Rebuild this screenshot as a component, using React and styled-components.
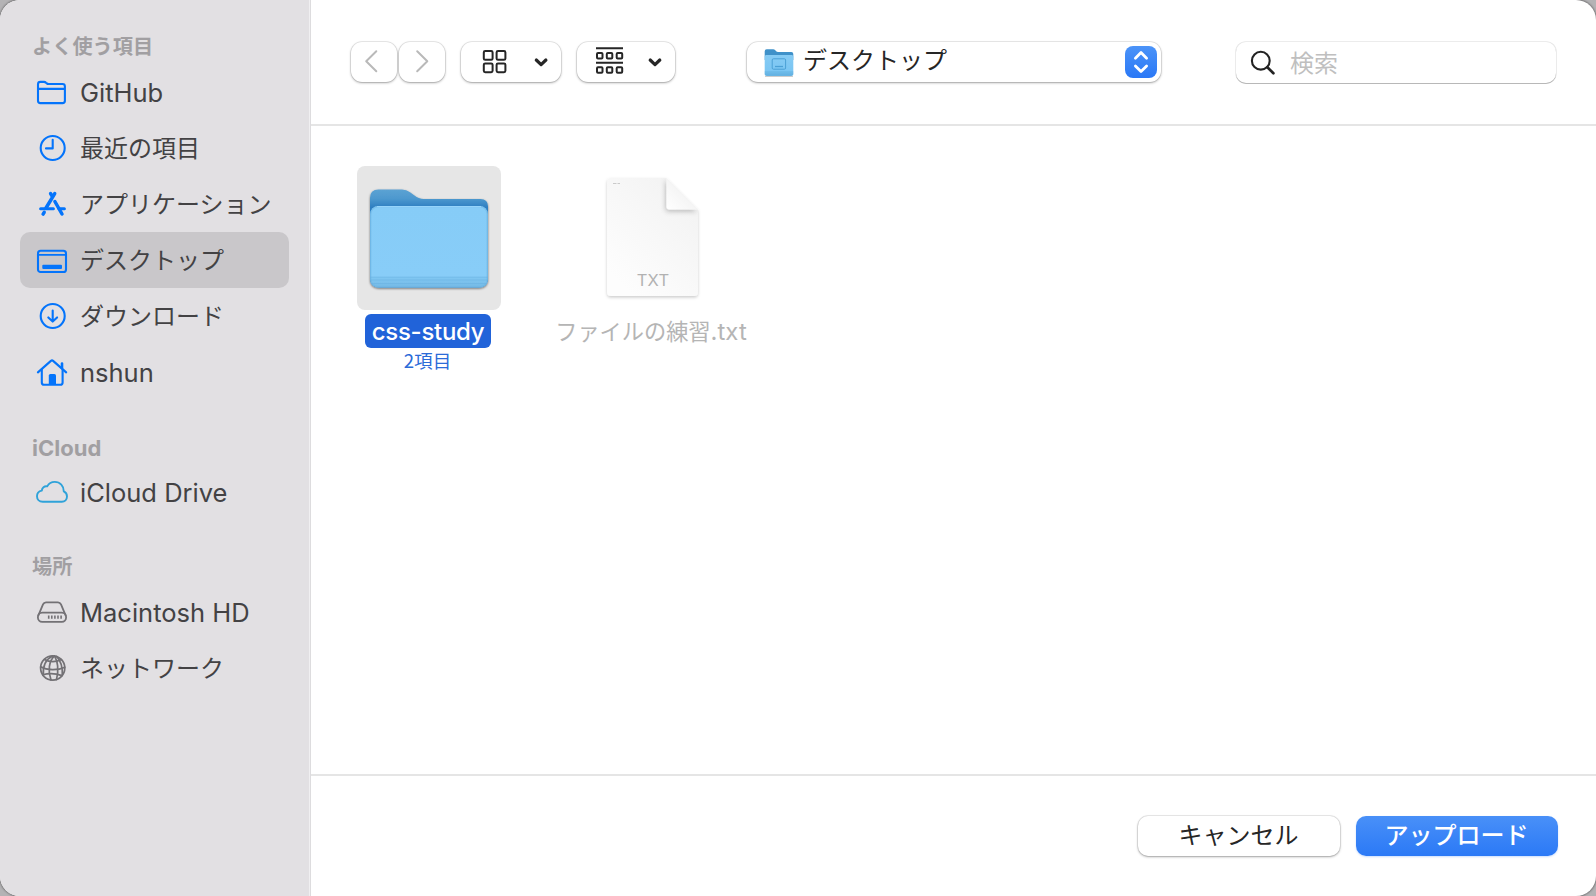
import React from 'react';
import styled, { createGlobalStyle, css } from 'styled-components';

const GlobalStyle = createGlobalStyle`
  * { box-sizing: border-box; }
  html, body { margin: 0; padding: 0; }
  body {
    background: #b4b3b5;
    overflow: hidden;
    font-family: Inter, "Noto Sans CJK JP", sans-serif;
  }
  svg { display: block; flex: none; }
`;

const jp = css`
  font-family: "Noto Sans CJK JP", sans-serif;
`;

const Window = styled.div`
  display: flex;
  width: 1596px;
  height: 896px;
  border-radius: 20px;
  overflow: hidden;
  background: #fff;
  box-shadow: 0 0 2px 1px rgba(0, 0, 0, 0.35);
`;

const Sidebar = styled.nav`
  width: 311px;
  flex: none;
  padding: 28px 20px 0;
  background: #e2e0e3;
  border-right: 1px solid #dddcde;
  box-shadow: inset -1px 0 0 #f0eff1;
`;

const Section = styled.section`
  margin-bottom: ${(p) => p.$gap}px;
`;

const SectionTitle = styled.h2`
  ${(p) => p.$jp && jp}
  margin: 0;
  padding-left: 12px;
  height: ${(p) => (p.$jp ? 36 : 35)}px;
  line-height: ${(p) => (p.$jp ? 36 : 38)}px;
  font-size: ${(p) => (p.$jp ? 20.2 : 22)}px;
  font-weight: ${(p) => (p.$jp ? 700 : 650)};
  color: #a19fa2;
`;

const Item = styled.div`
  display: flex;
  align-items: center;
  gap: 10px;
  width: 269px;
  height: 56px;
  padding-left: 14px;
  border-radius: 10px;
  background: ${(p) => (p.$selected ? '#c9c7ca' : 'transparent')};
  color: ${(p) => p.$tint};
`;

const ItemLabel = styled.span`
  ${(p) => p.$jp && jp}
  margin-top: ${(p) => (p.$jp ? -2 : 2)}px;
  font-size: ${(p) => (p.$jp ? 24 : 25.5)}px;
  line-height: 36px;
  white-space: nowrap;
  color: #434244;
`;

const Main = styled.main`
  flex: 1;
  display: flex;
  flex-direction: column;
`;

const Toolbar = styled.header`
  display: flex;
  align-items: flex-start;
  height: 126px;
  padding: 42px 0 0 40px;
  border-bottom: 2px solid #e5e5e5;
`;

const Control = styled.div`
  display: flex;
  align-items: center;
  flex: none;
  width: ${(p) => p.$w}px;
  height: 40px;
  margin-right: ${(p) => p.$after || 0}px;
  border-radius: 11px;
  background: #fff;
  box-shadow: 0 0 0 0.7px rgba(0, 0, 0, 0.1), 0 1px 2.5px rgba(0, 0, 0, 0.32);
`;

const PathName = styled.span`
  ${jp}
  flex: 1;
  padding-left: 8px;
  font-size: 24px;
  line-height: 36px;
  margin-top: -7px;
  color: #262626;
`;

const Stepper = styled.div`
  width: 32px;
  height: 32px;
  margin-right: 4px;
  border-radius: 8px;
  background: linear-gradient(#4b93f8, #2a78f6);
`;

const SearchField = styled.div`
  display: flex;
  align-items: center;
  width: 320px;
  height: 41px;
  padding-left: 14px;
  gap: 14px;
  border-radius: 10px;
  box-shadow: 0 0 0 0.8px rgba(0, 0, 0, 0.1), 0 1px 0.5px rgba(0, 0, 0, 0.22);
`;

const Placeholder = styled.span`
  ${jp}
  margin-top: -2px;
  font-size: 24px;
  line-height: 36px;
  color: #bfbfbf;
`;

const Files = styled.div`
  flex: 1;
  display: flex;
  align-items: flex-start;
  gap: 23px;
  padding: 40px 0 0 18px;
`;

const File = styled.div`
  display: flex;
  flex-direction: column;
  align-items: center;
  width: 200px;
`;

const Thumb = styled.div`
  width: 144px;
  height: 144px;
  border-radius: 8px;
  background: ${(p) => (p.$selected ? '#e6e6e6' : 'transparent')};
`;

const FileName = styled.div`
  height: 34px;
  margin: 4px 2px 0 0;
  padding: 0 6.5px;
  border-radius: 6px;
  font-size: 24px;
  line-height: ${(p) => (p.$selected ? 36 : 33)}px;
  letter-spacing: ${(p) => (p.$selected ? -0.3 : 0)}px;
  white-space: nowrap;
  font-weight: ${(p) => (p.$selected ? 500 : 400)};
  background: ${(p) => (p.$selected ? '#2163d9' : 'transparent')};
  color: ${(p) => (p.$selected ? '#fff' : '#b5b5b5')};
`;

const JpPart = styled.span`
  ${jp}
  font-size: 22.2px;
`;

const FileInfo = styled.div`
  ${jp}
  height: 24px;
  margin-right: 3px;
  line-height: 24px;
  font-size: 18.6px;
  color: #2b6bd8;
`;

const Footer = styled.footer`
  display: flex;
  justify-content: flex-end;
  gap: 16px;
  height: 122px;
  padding: 40px 38px 0 0;
  border-top: 2px solid #e5e5e5;
`;

const Button = styled.button`
  ${jp}
  width: 202px;
  height: 40px;
  padding: 0 1px 5px 0;
  border: 0;
  border-radius: 10px;
  font-size: 24px;
  line-height: 35px;
  font-weight: ${(p) => (p.$primary ? 500 : 400)};
  color: ${(p) => (p.$primary ? '#fff' : '#262626')};
  background: ${(p) => (p.$primary ? 'linear-gradient(#4990f8, #2b79f6)' : '#fff')};
  box-shadow: ${(p) =>
    p.$primary
      ? '0 1px 2px rgba(43, 121, 246, 0.25)'
      : '0 0 0 0.7px rgba(0,0,0,0.1), 0 1px 2.5px rgba(0,0,0,0.32)'};
`;

const Glyph = ({ children, sw = 2.1 }) => (
  <svg width="36" height="32" viewBox="0 0 36 32" fill="none" stroke="currentColor" strokeWidth={sw} strokeLinecap="round" strokeLinejoin="round">
    {children}
  </svg>
);

const FolderGlyph = () => (
  <Glyph>
    <path d="M4 8.2Q4 5.9 6.4 5.9H10Q11.2 5.9 12 6.7L12.8 7.4Q13.5 8 14.6 8H28.5Q30.9 8 30.9 10.4V24.7Q30.9 27.1 28.5 27.1H6.4Q4 27.1 4 24.7ZM4 12.9H31" />
  </Glyph>
);
const ClockGlyph = () => (
  <Glyph>
    <circle cx="18.7" cy="16" r="12" />
    <path d="M18.7 7.8V16.4H12" />
  </Glyph>
);
const AppsGlyph = () => (
  <Glyph sw={3.5}>
    <path d="M20.7 5.6L12 20M16.6 5.6L18.4 8.6M20.9 13.5L28 26M10.2 24.3L9.1 26.1" />
    <path d="M6.6 20.7H19.4M25 20.7H30.4" strokeWidth="3" />
  </Glyph>
);
const DesktopGlyph = () => (
  <Glyph>
    <rect x="4" y="6.8" width="28" height="21.2" rx="2.6" />
    <path d="M4 10.8H32" strokeWidth="1.8" />
    <rect x="8.3" y="20.8" width="19.7" height="4.3" rx="1" fill="currentColor" stroke="none" />
  </Glyph>
);
const DownloadGlyph = () => (
  <Glyph>
    <circle cx="18.7" cy="16" r="12" />
    <path d="M18.7 10.5V21.3M14.3 17.4L18.7 21.6L23.1 17.4" />
  </Glyph>
);
const HomeGlyph = () => (
  <Glyph>
    <path d="M3.9 16.4L16.9 4.9Q18 4 19.1 4.9L32.2 16.4" />
    <path d="M7.8 13.5V26.4Q7.8 28.8 10.2 28.8H26.2Q28.6 28.8 28.6 26.4V13.5" />
    <path d="M28 7.5V12" strokeWidth="2.6" />
    <path d="M14.8 28.8V19.6Q14.8 18 16.4 18H20.4Q22 18 22 19.6V28.8Z" fill="currentColor" stroke="none" />
  </Glyph>
);
const CloudGlyph = () => (
  <Glyph sw={1.9}>
    <path d="M8.8 25.7C5 25.7 3 23.2 3 20.2C3 17.4 4.8 15.2 7.8 14.6C8 11.8 10.3 9.8 13.2 10.4C14.8 7.4 17.6 5.9 20.8 5.9C26 5.9 29.9 10 29.8 15.4C32 16.4 33 18.3 33 20.5C33 23.5 30.8 25.7 27.8 25.7Z" />
  </Glyph>
);
const DriveGlyph = () => (
  <Glyph sw={1.8}>
    <path d="M4.4 19.4L9 8.4Q9.9 6.3 12 6.3H24Q26.1 6.3 27 8.4L31.6 19.4" />
    <rect x="3.9" y="16.7" width="28.2" height="9.1" rx="4.3" />
    <path d="M14.7 19.4V22.8M17.8 19.4V22.8M20.9 19.4V22.8M24 19.4V22.8M27.1 19.4V22.8" strokeWidth="1.6" strokeLinecap="butt" />
  </Glyph>
);
const GlobeGlyph = () => (
  <Glyph sw={1.7}>
    <circle cx="18.7" cy="16" r="12.1" />
    <path d="M20.5 3.9C15 8.8 13.6 18.8 17 28M20.5 3.9C24 9.8 24.8 17.8 22.5 27.6M18.5 3.9C11.5 7.3 8.6 13.3 9.3 23.6M22.5 4.4C27.4 9.2 28.7 14.3 28.3 23.3" />
    <path d="M10.5 7.6C15.5 10.2 22 10.2 27.5 7.6M6.6 14.8C13 18.4 23.5 18.6 30.8 15.2M8.7 22.8C14.5 21.2 22 21.5 28 23.6" />
  </Glyph>
);

const Nav = ({ d }) => (
  <svg width="46" height="40" viewBox="0 0 46 40" fill="none" stroke="#b9b9b9" strokeWidth="2" strokeLinecap="round" strokeLinejoin="round">
    <path d={d} />
  </svg>
);

const ICON_CELLS = [[22.8, 9], [35.6, 9], [22.8, 21.4], [35.6, 21.4]];

const IconViewGlyph = () => (
  <svg width="100" height="40" viewBox="0 0 100 40" fill="none" stroke="#262626" strokeWidth="2">
    {ICON_CELLS.map(([x, y]) => (
      <rect key={`${x}-${y}`} x={x} y={y} width="8.8" height="8.8" rx="1.4" />
    ))}
    <path d="M75.3 18L80.1 22.6L84.9 18" strokeWidth="3.2" strokeLinecap="round" strokeLinejoin="round" />
  </svg>
);

const GroupViewGlyph = () => (
  <svg width="98" height="40" viewBox="0 0 98 40" fill="none" stroke="#262626" strokeWidth="2">
    <path d="M19 6.2H46M19 20.7H46" strokeWidth="1.9" />
    {[11, 25.2].map((y) =>
      [20, 29.8, 39.7].map((x) => <rect key={`${x}-${y}`} x={x} y={y} width="5.5" height="5.6" rx="1" />)
    )}
    <path d="M73.2 18L78 22.6L82.8 18" strokeWidth="3.2" strokeLinecap="round" strokeLinejoin="round" />
  </svg>
);

const SmallFolder = () => (
  <svg width="48" height="40" viewBox="0 0 48 40">
    <defs>
      <linearGradient id="smallFront" x1="0" y1="0" x2="0" y2="1">
        <stop offset="0" stopColor="#86cbf4" />
        <stop offset="0.75" stopColor="#7bc6f3" />
        <stop offset="1" stopColor="#66b2e1" />
      </linearGradient>
    </defs>
    <path d="M18 34.4H46" stroke="#000" strokeOpacity="0.22" strokeWidth="1" />
    <path d="M17.7 9.2Q17.7 7.2 19.7 7.2H26.2Q27.4 7.2 28.3 8.2L29.2 9.2Q29.9 9.9 31 9.9H44.3Q46.3 9.9 46.3 11.9V18H17.7Z" fill="#3f91c9" />
    <path d="M17.7 14.5Q17.7 13 19.2 13H44.8Q46.3 13 46.3 14.5V32Q46.3 34 44.3 34H19.7Q17.7 34 17.7 32Z" fill="url(#smallFront)" />
    <rect x="25.2" y="16.8" width="13.4" height="10.4" rx="1.2" fill="none" stroke="#4ba0d6" strokeWidth="1" />
    <path d="M28 24.5H36" stroke="#4ba0d6" strokeWidth="1.3" />
    <path d="M17.7 30H46.3M17.7 32H46.3" stroke="#5daddd" strokeWidth="0.6" />
  </svg>
);

const StepperArrows = () => (
  <svg width="32" height="32" viewBox="0 0 32 32" fill="none" stroke="#fff" strokeWidth="2.8" strokeLinecap="round" strokeLinejoin="round">
    <path d="M10.4 12.2L16 6.6L21.6 12.2M10.4 20L16 25.6L21.6 20" />
  </svg>
);

const SearchGlyph = () => (
  <svg width="26" height="41" viewBox="0 0 26 41" fill="none" stroke="#232323" strokeLinecap="round">
    <circle cx="10.8" cy="18.7" r="8.9" strokeWidth="2.1" />
    <path d="M17.4 25.3L23.4 31.3" strokeWidth="2.7" />
  </svg>
);

const BigFolder = () => (
  <svg width="144" height="144" viewBox="0 0 144 144">
    <defs>
      <linearGradient id="folderBack" x1="0" y1="24" x2="0" y2="46" gradientUnits="userSpaceOnUse">
        <stop offset="0" stopColor="#5ba2d3" />
        <stop offset="0.4" stopColor="#4d98ce" />
        <stop offset="0.8" stopColor="#2d7ec1" />
      </linearGradient>
      <linearGradient id="folderFront" x1="0" y1="0" x2="0" y2="1">
        <stop offset="0" stopColor="#8acdf6" />
        <stop offset="0.02" stopColor="#86ccf7" />
        <stop offset="0.86" stopColor="#88cdf8" />
        <stop offset="0.88" stopColor="#80c7f2" />
        <stop offset="1" stopColor="#74b9e5" />
      </linearGradient>
      <filter id="folderShade" x="-10%" y="-10%" width="120%" height="125%">
        <feDropShadow dx="0" dy="1" stdDeviation="1" floodColor="#000" floodOpacity="0.5" />
      </filter>
    </defs>
    <g filter="url(#folderShade)">
      <path d="M13 32Q13 23.5 21.5 23.5H45Q49.5 23.5 53 26.2L57.5 29.6Q61.5 33 67 33H123.5Q131 33 131 40.5V112.5Q131 121.5 122 121.5H22Q13 121.5 13 112.5Z" fill="url(#folderBack)" />
      <rect x="13.2" y="40" width="117.6" height="81.5" rx="8" fill="url(#folderFront)" />
    </g>
    <rect x="13.8" y="40.6" width="116.4" height="80.3" rx="7.5" fill="none" stroke="#6cb4e2" strokeOpacity="0.5" strokeWidth="1.2" />
    <path d="M20 40.6H124" stroke="#9ad7fb" strokeWidth="1" />
    <path d="M13.5 111.2H130.5M13.5 114H130.5M15 117.5H129" stroke="#67b0df" strokeOpacity="0.5" strokeWidth="1" />
  </svg>
);

const TypeTag = styled.text`
  font-family: Inter, sans-serif;
  font-size: 16.5px;
  letter-spacing: 0.2px;
  fill: #b2b2b2;
`;

const TextDocument = () => (
  <svg width="144" height="144" viewBox="0 0 144 144">
    <defs>
      <linearGradient id="paper" x1="1" y1="0.1" x2="0.3" y2="1">
        <stop offset="0" stopColor="#f2f2f2" />
        <stop offset="1" stopColor="#fdfdfd" />
      </linearGradient>
      <linearGradient id="curl" x1="0" y1="1" x2="0.6" y2="0.4">
        <stop offset="0" stopColor="#ffffff" />
        <stop offset="1" stopColor="#f3f3f3" />
      </linearGradient>
      <filter id="paperShade" x="-10%" y="-10%" width="120%" height="120%">
        <feDropShadow dx="0" dy="1.5" stdDeviation="1.4" floodColor="#000" floodOpacity="0.2" />
      </filter>
      <filter id="curlShade" x="-40%" y="-40%" width="180%" height="180%">
        <feDropShadow dx="-1" dy="2" stdDeviation="2.6" floodColor="#000" floodOpacity="0.24" />
      </filter>
      <clipPath id="paperClip">
        <path d="M27 16Q27 12 31 12H86.5L118 43.5V126Q118 130 114 130H31Q27 130 27 126Z" />
      </clipPath>
    </defs>
    <path d="M27 16Q27 12 31 12H86.5L118 43.5V126Q118 130 114 130H31Q27 130 27 126Z" fill="url(#paper)" filter="url(#paperShade)" />
    <g clipPath="url(#paperClip)">
      <path d="M86.5 12V40.5Q86.5 43.5 89.5 43.5H118Z" fill="url(#curl)" filter="url(#curlShade)" />
    </g>
    <path d="M33 17.5H36.5M37.5 17.5H40" stroke="#c4c4c4" strokeWidth="0.9" />
    <TypeTag x="73" y="119.7" textAnchor="middle">TXT</TypeTag>
  </svg>
);

const BLUE = '#0474fb';
const GRAY = '#737175';

const SECTIONS = [
  {
    title: 'よく使う項目', jp: true, gap: 29,
    items: [
      { label: 'GitHub', icon: FolderGlyph },
      { label: '最近の項目', icon: ClockGlyph, jp: true },
      { label: 'アプリケーション', icon: AppsGlyph, jp: true },
      { label: 'デスクトップ', icon: DesktopGlyph, jp: true, selected: true },
      { label: 'ダウンロード', icon: DownloadGlyph, jp: true },
      { label: 'nshun', icon: HomeGlyph },
    ],
  },
  { title: 'iCloud', gap: 28, items: [{ label: 'iCloud Drive', icon: CloudGlyph, tint: '#2fa2d9' }] },
  {
    title: '場所', jp: true, gap: 0,
    items: [
      { label: 'Macintosh HD', icon: DriveGlyph, tint: GRAY },
      { label: 'ネットワーク', icon: GlobeGlyph, tint: GRAY, jp: true },
    ],
  },
];

export default function App() {
  return (
    <>
      <GlobalStyle />
      <Window>
        <Sidebar>
          {SECTIONS.map((s) => (
            <Section key={s.title} $gap={s.gap}>
              <SectionTitle $jp={s.jp}>{s.title}</SectionTitle>
              {s.items.map((it) => (
                <Item key={it.label} $selected={it.selected} $tint={it.tint || BLUE}>
                  <it.icon />
                  <ItemLabel $jp={it.jp}>{it.label}</ItemLabel>
                </Item>
              ))}
            </Section>
          ))}
        </Sidebar>
        <Main>
          <Toolbar>
            <Control $w={46} $after={2}><Nav d="M25.3 9.2L15.2 19.2L25.3 29.2" /></Control>
            <Control $w={46} $after={16}><Nav d="M18.2 9.2L28.3 19.2L18.2 29.2" /></Control>
            <Control $w={100} $after={16}><IconViewGlyph /></Control>
            <Control $w={98} $after={72}><GroupViewGlyph /></Control>
            <Control $w={414} $after={75}>
              <SmallFolder />
              <PathName>デスクトップ</PathName>
              <Stepper><StepperArrows /></Stepper>
            </Control>
            <SearchField>
              <SearchGlyph />
              <Placeholder>検索</Placeholder>
            </SearchField>
          </Toolbar>
          <Files>
            <File>
              <Thumb $selected><BigFolder /></Thumb>
              <FileName $selected>css-study</FileName>
              <FileInfo>2項目</FileInfo>
            </File>
            <File>
              <Thumb><TextDocument /></Thumb>
              <FileName><JpPart>ファイルの練習</JpPart>.txt</FileName>
            </File>
          </Files>
          <Footer>
            <Button>キャンセル</Button>
            <Button $primary>アップロード</Button>
          </Footer>
        </Main>
      </Window>
    </>
  );
}
